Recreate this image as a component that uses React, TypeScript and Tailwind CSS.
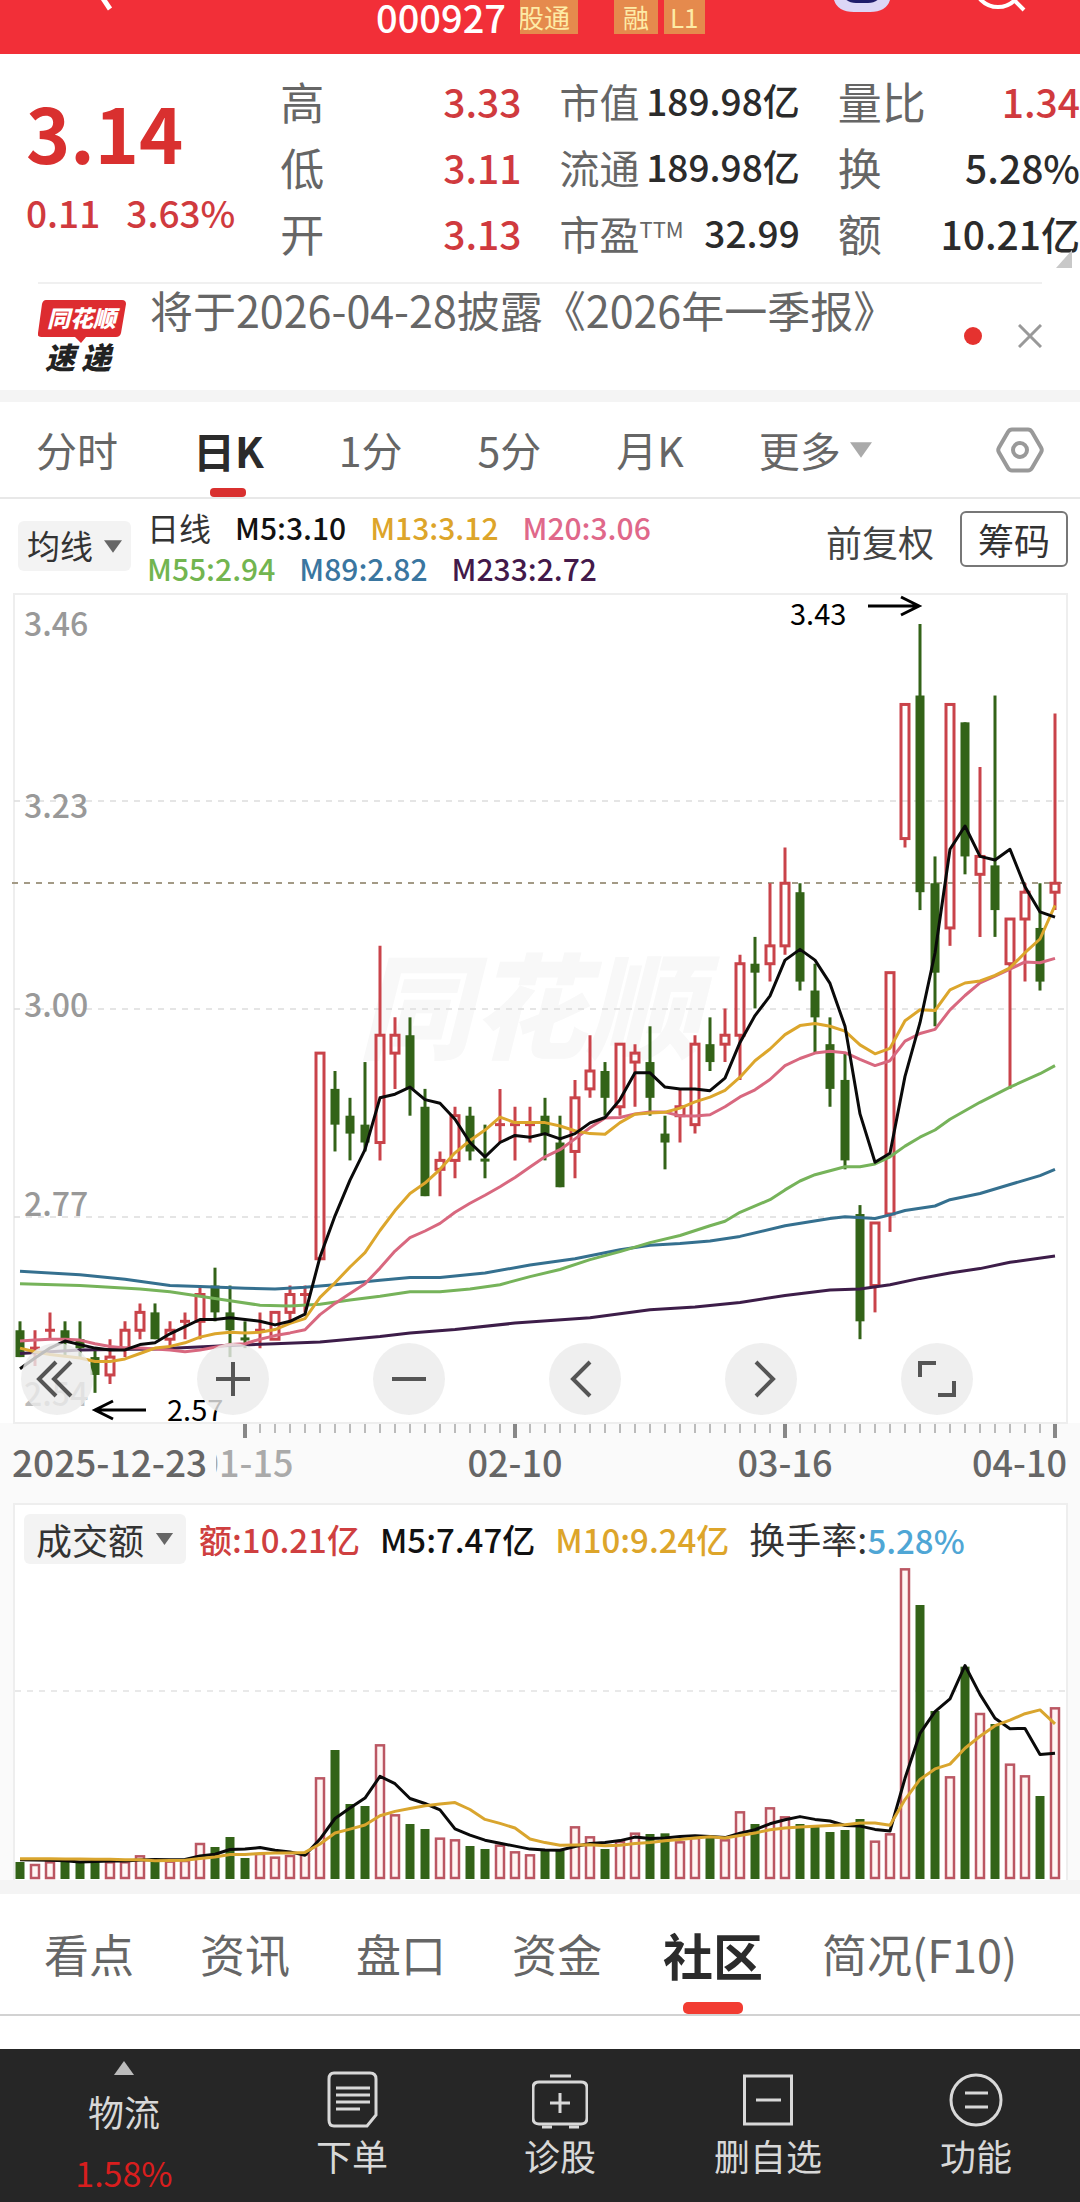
import { useState } from 'react'
import clsx from 'clsx'

type Candle = [open: number, high: number, low: number, close: number]
type Point = [index: number, value: number]

// prices are in cents
const candles: Candle[] = [
  [264, 265, 261, 261], [262, 264, 260, 262], [264, 266, 263, 264], [264, 265, 261, 263],
  [263, 265, 261, 262], [261, 262, 257, 259], [259, 263, 258, 261], [262, 265, 261, 264],
  [264, 267, 263, 266], [266, 267, 263, 263], [263, 265, 262, 264], [265, 266, 263, 265],
  [265, 269, 263, 268], [269, 271, 265, 266], [266, 269, 261, 264], [263.2, 265, 262, 263],
  [264, 266, 262, 264], [263, 266, 263, 266], [266, 269, 265, 268], [268, 269, 266, 268],
  [272, 295, 272, 295], [291, 293, 284, 287], [288, 290, 283, 286], [287, 294, 284, 285],
  [285, 307, 283, 297], [295, 299, 291, 297], [297, 299, 288, 291], [289, 291, 279, 279],
  [282, 284, 279, 283], [283, 289, 281, 288], [288, 289, 283, 284], [283.2, 287, 281, 283],
  [287, 291, 285, 287], [287, 289, 283, 287], [287, 289, 285, 287], [288, 290, 283, 286],
  [285, 288, 280, 280], [284, 292, 281, 290], [291, 297, 290, 293], [293, 294, 288, 290],
  [289, 296, 288, 296], [294, 296, 289, 295], [294, 298, 288, 290], [286, 288, 282, 285],
  [288, 291, 285, 289], [287, 297, 286, 296], [296, 299, 293, 294], [296, 300, 294, 297],
  [297, 306, 292, 305], [305, 308, 300, 304], [305, 314, 303, 307], [307, 318, 306, 314],
  [313, 314, 302, 303], [302, 305, 295, 299], [296, 299, 289, 291], [292, 295, 282, 283],
  [277, 278, 263, 265], [269, 276, 266, 276], [277, 304, 275, 304], [319, 334, 318, 334],
  [335, 343, 311, 313], [314, 317, 298, 304], [309, 334, 307, 334], [332, 332, 315, 317],
  [315, 327, 308, 317], [316, 335, 308, 311], [305, 310, 291, 310], [310, 314, 303, 313],
  [309, 314, 302, 303], [313, 333, 311, 314],
]

const turnover = [
  51, 45, 53, 56, 49, 61, 53, 53, 71, 56, 55, 57, 108, 96, 126, 63, 78, 67, 72, 77, 305, 387, 225,
  219, 404, 194, 165, 150, 124, 119, 99, 90, 103, 83, 74, 86, 86, 158, 128, 90, 114, 139, 135, 137,
  113, 126, 126, 119, 203, 165, 215, 188, 165, 161, 141, 147, 180, 115, 137, 932, 822, 504, 308,
  637, 498, 465, 346, 311, 249, 515,
]

const m55: Point[] = [
  [0, 269.2], [4, 269], [6, 268.8], [8, 268.6], [10, 268.3], [12, 267.8], [14, 267.3], [16, 266.8],
  [18, 266.7], [20, 266.9], [22, 267.4], [24, 267.8], [26, 268.3], [28, 268.3], [30, 268.6],
  [32, 269.1], [34, 270], [36, 270.8], [38, 271.9], [40, 272.8], [42, 273.8], [44, 274.6],
  [46, 275.7], [47, 276.2], [48, 277.2], [50, 278.6], [51, 279.7], [52, 280.7], [53, 281.4],
  [55, 282.3], [56, 282.3], [57, 282.6], [58, 283.4], [59, 284.6], [60, 285.6], [61, 286.4],
  [62, 287.6], [64, 289.5], [66, 291.2], [68, 292.7], [69, 293.6],
]

const m89: Point[] = [
  [0, 270.6], [4, 270.2], [7, 269.7], [10, 269], [12, 268.9], [15, 268.7], [17, 268.6], [19, 268.8],
  [21, 269.1], [24, 269.6], [26, 269.9], [28, 269.9], [31, 270.4], [34, 271.3], [37, 272],
  [40, 273], [42, 273.5], [44, 273.7], [46, 274], [48, 274.5], [51, 275.7], [54, 276.5],
  [55, 276.7], [57, 276.5], [58, 276.9], [59, 277.4], [61, 277.9], [62, 278.6], [64, 279.3],
  [66, 280.3], [68, 281.3], [69, 282],
]

const m233: Point[] = [
  [0, 261.4], [4, 261.8], [9, 261.9], [14, 262.3], [17, 262.5], [20, 262.7], [22, 263],
  [24, 263.3], [26, 263.7], [29, 264.1], [33, 264.8], [38, 265.4], [42, 266.3], [45, 266.6],
  [48, 267.1], [51, 267.9], [54, 268.5], [56, 268.6], [58, 269.1], [60, 269.8], [62, 270.4],
  [64, 270.9], [66, 271.6], [69, 272.3],
]

// seed holds the averages for the days whose window starts before the first candle
function average(values: number[], n: number, seed: number[]): Point[] {
  return values.map((_, i) => {
    if (i < n - 1) return [i, seed[i]]
    const window = values.slice(i - n + 1, i + 1)
    return [i, window.reduce((a, b) => a + b, 0) / n]
  })
}

const closes = candles.map((c) => c[3])
const m5 = average(closes, 5, [259.7, 260.9, 262, 262.8])
const m13 = average(
  closes,
  13,
  [262, 261.6, 261.3, 261.1, 260.9, 260.5, 260.5, 260.8, 261.4, 262, 262.2, 262.6],
)
const m20 = average(
  closes,
  20,
  [
    262.8, 262.9, 263, 263, 262.9, 262.5, 262.2, 262, 262, 261.9, 261.8, 261.6, 261.8, 262.1, 262.4,
    262.5, 263, 263.4, 263.7,
  ],
)
const volM5 = average(turnover, 5, [58, 57, 56, 55])
const volM10 = average(turnover, 10, [61, 61, 61, 60, 60, 59, 59, 58, 58])

const isRed = (c: Candle) => c[3] >= c[0]

const RED = '#c9434a'
const GREEN = '#336318'

const xOf = (i: number) => 20 + i * 15
const priceY = (p: number) => 31 + (343 - p) * 8.94
const volY = (v: number) => 374 - v / 3

const toPoints = (pts: Point[], y: (v: number) => number) =>
  pts.map(([i, v]) => `${xOf(i)},${y(v).toFixed(1)}`).join(' ')

function Line(p: { points: string; color: string }) {
  return (
    <polyline
      points={p.points}
      fill="none"
      stroke={p.color}
      strokeWidth="3"
      strokeLinejoin="round"
    />
  )
}

function Caret({ className }: { className?: string }) {
  return (
    <svg viewBox="0 0 20 14" className={className} fill="currentColor" aria-hidden="true">
      <path d="M0 0h20L10 14z" />
    </svg>
  )
}

function Header() {
  return (
    <header className="flex h-[54px] items-start overflow-hidden bg-[#f22f38] pl-[90px] pr-[52px]">
      <button aria-label="返回">
        <svg viewBox="0 0 24 12" className="h-3 w-6" fill="none" stroke="#fff" strokeWidth="5">
          <path d="M6-12 20 9" />
        </svg>
      </button>
      <div className="ml-[262px] flex items-center gap-[14px] text-white">
        <h1 className="text-[38px] font-medium leading-[34px]">000927</h1>
        <div className="flex gap-[6px] text-[26px] leading-[34px] text-[#fdeba6]">
          <span className="flex w-[58px] justify-end overflow-hidden bg-[#e58a4d] pr-2">
            <span className="shrink-0">股通</span>
          </span>
          <span className="ml-[30px] bg-[#e58a4d] px-[9px]">融</span>
          <span className="bg-[#e58a4d] px-[6px]">L1</span>
        </div>
      </div>
      <button aria-label="智能助手" className="ml-auto">
        <svg viewBox="0 0 60 14" className="h-[14px] w-[60px]">
          <path d="M1-6h58Q58 12 38 12H22Q2 12 1-6z" fill="#dcd6f6" />
          <path d="M10-6h40Q46 3 36 3H24Q14 3 10-6z" fill="#1f1c6b" />
        </svg>
      </button>
      <button aria-label="搜索" className="ml-[80px]">
        <svg viewBox="0 0 56 14" className="h-[14px] w-14" fill="none" stroke="#fff" strokeWidth="4">
          <circle cx="26" cy="-17" r="24" />
          <path d="m42 0 10 10" />
        </svg>
      </button>
    </header>
  )
}

const quotes = [
  [
    ['高', '3.33'],
    ['低', '3.11'],
    ['开', '3.13'],
  ],
  [
    ['市值', '189.98亿'],
    ['流通', '189.98亿'],
    ['市盈', '32.99'],
  ],
  [
    ['量比', '1.34'],
    ['换', '5.28%'],
    ['额', '10.21亿'],
  ],
]

function Quote() {
  return (
    <section className="relative grid grid-cols-[216fr_241fr_240fr_242fr] gap-x-[38px] pb-4 pl-[26px] pt-[14px]">
      <div className="text-[#d9302f]">
        <div className="pt-[9px] text-[75px] font-bold leading-[110px]">3.14</div>
        <div className="flex gap-[26px] text-[37px] font-medium leading-[50px] text-[#d03a3e]">
          <span>0.11</span>
          <span>3.63%</span>
        </div>
      </div>
      {quotes.map((col, i) => (
        <dl key={i}>
          {col.map(([label, value]) => (
            <div key={label} className="flex h-[66px] items-center justify-between">
              <dt
                className={clsx(
                  'whitespace-nowrap text-[#666]',
                  i === 1 ? 'text-[40px]' : 'text-[44px]',
                )}
              >
                {label}
                {label === '市盈' && <sup className="-top-[12px] text-[22px]">TTM</sup>}
              </dt>
              <dd
                className={clsx(
                  'whitespace-nowrap font-medium',
                  i === 1 ? 'text-[37px]' : 'text-[39px]',
                  i === 0 || value === '1.34' ? 'text-[#d03a3e]' : 'text-[#2b2b2b]',
                )}
              >
                {value}
              </dd>
            </div>
          ))}
        </dl>
      ))}
      <svg viewBox="0 0 16 18" className="absolute bottom-[14px] right-2 h-[18px] w-4" fill="#c8c8c8">
        <path d="M16 0v18H0z" />
      </svg>
    </section>
  )
}

function News() {
  return (
    <section className="mx-[38px] flex h-[108px] border-t-2 border-[#f0f0f0]">
      <svg viewBox="0 0 88 84" className="mt-4 h-[84px] w-[88px] shrink-0" aria-label="同花顺速递">
        <path d="M8 0h76q4 0 4 4l-5 29q-1 4-5 4H48l-5 6-6-6H3q-4 0-3-4L4 4q1-4 4-4z" fill="#dd2c30" />
        <text x="9" y="27" fontSize="23" fontWeight="900" fontStyle="italic" fill="#fff">
          同花顺
        </text>
        <g fontSize="30" fontWeight="900" fontStyle="italic" fill="#222">
          <text x="7" y="69">速</text>
          <text x="43" y="69">递</text>
        </g>
      </svg>
      <a href="#" className="ml-6 whitespace-nowrap text-[43px] leading-[50px] text-[#666]">
        将于2026-04-28披露《2026年一季报》
      </a>
      <div className="ml-auto mt-[43px] flex h-[18px] items-center gap-9">
        <i className="size-[18px] rounded-full bg-[#e5322f]" />
        <button aria-label="关闭">
          <svg viewBox="0 0 24 24" className="size-6" fill="none" stroke="#999" strokeWidth="3">
            <path d="m1 1 22 22M23 1 1 23" />
          </svg>
        </button>
      </div>
    </section>
  )
}

const periods = ['分时', '日K', '1分', '5分', '月K']

function Periods() {
  const [active, setActive] = useState('日K')

  return (
    <nav className="flex h-[97px] items-stretch gap-[75px] border-b-2 border-[#e8e8e8] pl-[36px] pr-[36px] text-[41px] text-[#666]">
      {periods.map((name) => (
        <button
          key={name}
          onClick={() => setActive(name)}
          className={clsx(
            'relative whitespace-nowrap',
            name === active && 'text-[42px] font-bold text-[#2b2b2b]',
          )}
        >
          {name}
          {name === active && (
            <span className="absolute bottom-0 left-1/2 h-[9px] w-9 -translate-x-1/2 rounded-[4px] bg-[#d9302f]" />
          )}
        </button>
      ))}
      <button className="flex items-center gap-[9px] whitespace-nowrap">
        更多
        <Caret className="h-[18px] w-[22px] text-[#aaa]" />
      </button>
      <button aria-label="设置" className="ml-auto">
        <svg viewBox="0 0 48 46" className="h-[46px] w-12" fill="none" stroke="#999" strokeWidth="4">
          <path d="M16 2.500h16q2.500 0 4 2.500l9 15.500q1.500 2.500 0 5L36 41q-1.500 2.500-4 2.500H16q-2.500 0-4-2.500L3 25.500q-1.500-2.500 0-5L12 5q1.500-2.500 4-2.500z" />
          <circle cx="24" cy="23" r="7" />
        </svg>
      </button>
    </nav>
  )
}

function Averages() {
  return (
    <section className="flex h-[94px] items-start justify-between pl-[18px] pr-3">
      <div className="flex gap-4">
        <button className="mt-[22px] flex h-[50px] items-center gap-[11px] rounded-[6px] bg-[#f3f3f3] px-[9px] text-[33px] text-[#333]">
          均线
          <Caret className="h-[13px] w-[18px] text-[#666]" />
        </button>
        <div className="flex flex-col pt-2 text-[30px] font-medium leading-[41px]">
          <div className="flex gap-6">
            <span className="text-[32px] font-normal text-[#333]">日线</span>
            <span className="text-[#111]">M5:3.10</span>
            <span className="text-[#dda52a]">M13:3.12</span>
            <span className="text-[#e0688a]">M20:3.06</span>
          </div>
          <div className="flex gap-6">
            <span className="text-[#72b550]">M55:2.94</span>
            <span className="text-[#3a76a0]">M89:2.82</span>
            <span className="text-[#43194a]">M233:2.72</span>
          </div>
        </div>
      </div>
      <div className="mt-[11px] flex items-center gap-[26px] text-[36px] text-[#444]">
        <button className="pt-1">前复权</button>
        <button className="h-[56px] rounded-[6px] border-2 border-[#777] px-4 leading-[50px] text-[#333]">
          筹码
        </button>
      </div>
    </section>
  )
}

const controls = [
  { label: '最早', d: 'M35 19 18 36l17 17M50 19 33 36l17 17' },
  { label: '放大', d: 'M19 36h34M36 19v34' },
  { label: '缩小', d: 'M19 36h34' },
  { label: '前移', d: 'M41 19 24 36l17 17' },
  { label: '后移', d: 'M31 19l17 17-17 17' },
  { label: '全屏', d: 'M19 34V20h16M53 38v14H37' },
]

function KLine() {
  return (
    <section className="relative bg-[#fafafa]">
      <svg viewBox="0 0 1080 910" className="block w-full" fontWeight="500">
        <path d="M0 0h1080v830H0z" fill="#fff" />
        <rect x="14" y="1" width="1053" height="829" fill="#fff" stroke="#eee" strokeWidth="2" />
        <text x="358" y="457" fontSize="114" fontWeight="900" fontStyle="italic" fill="#f8f8f8">
          同花顺
        </text>
        <path
          d="M14 208h1053M14 416h1053M14 624h1053"
          stroke="#ddd"
          strokeWidth="1.500"
          strokeDasharray="6 6"
        />
        <path d="M12 290h1055" stroke="#a39a86" strokeWidth="2" strokeDasharray="6 6" />
        <g fontSize="32" fill="#999">
          <text x="24" y="43">3.46</text>
          <text x="24" y="225">3.23</text>
          <text x="24" y="424">3.00</text>
          <text x="24" y="623">2.77</text>
          <text x="24" y="813" fill="#bbb">2.54</text>
        </g>
        {candles.map((c, i) => {
          const [open, high, low, close] = c
          const x = xOf(i)
          const top = priceY(Math.max(open, close))
          const height = Math.abs(open - close) * 8.94
          if (!isRed(c)) {
            return (
              <g key={i} fill={GREEN}>
                <rect x={x - 1.5} y={priceY(high)} width="3" height={(high - low) * 8.94} />
                <rect x={x - 4.5} y={top} width="9" height={Math.max(height, 3)} />
              </g>
            )
          }
          return (
            <g key={i} fill="none" stroke={RED} strokeWidth="3">
              <path d={`M${x} ${priceY(high)}V${top}M${x} ${top + height}V${priceY(low)}`} />
              {height ? (
                <rect x={x - 4} y={top} width="8" height={height} />
              ) : (
                <path d={`M${x - 5} ${top}h10`} />
              )}
            </g>
          )
        })}
        <Line points={toPoints(m233, priceY)} color="#3d1d49" />
        <Line points={toPoints(m89, priceY)} color="#35708f" />
        <Line points={toPoints(m55, priceY)} color="#76b35a" />
        <Line points={toPoints(m20, priceY)} color="#d8687f" />
        <Line points={toPoints(m13, priceY)} color="#dca62c" />
        <Line points={toPoints(m5, priceY)} color="#0a0a0a" />
        <g fill="none" stroke="#000" strokeWidth="3">
          <path d="M868 13h50M901 4l18 9-18 9" />
          <path d="M146 817H96M113 808l-18 9 18 9" />
        </g>
        <g fontSize="29" fontWeight="400">
          <text x="790" y="32">3.43</text>
          <text x="167" y="828">2.57</text>
        </g>
        {Array.from({ length: 55 }, (_, k) => {
          const i = k + 15
          const big = i % 18 === 15
          return (
            <path
              key={i}
              d={`M${xOf(i)} 831v${big ? 14 : 9}`}
              stroke={big ? '#888' : '#bbb'}
              strokeWidth={big ? 4 : 2}
            />
          )
        })}
        <g fontSize="36" fill="#666" textAnchor="middle">
          <text x="246" y="884" fill="#aaa">01-15</text>
          <rect x="12" y="850" width="204" height="40" fill="#fafafa" />
          <text x="12" y="884" fontSize="37" textAnchor="start">2025-12-23</text>
          <text x="515" y="884">02-10</text>
          <text x="785" y="884">03-16</text>
          <text x="1067" y="884" textAnchor="end">04-10</text>
        </g>
      </svg>
      <div className="absolute inset-x-0 bottom-[88px] flex justify-between pl-[21px] pr-[107px]">
        {controls.map((c) => (
          <button key={c.label} aria-label={c.label} className="size-[72px] rounded-full bg-[#ebebeb]/80">
            <svg viewBox="0 0 72 72" className="size-full" fill="none" stroke="#555" strokeWidth="4">
              <path d={c.d} />
            </svg>
          </button>
        ))}
      </div>
    </section>
  )
}

function Turnover() {
  return (
    <section className="bg-[#fafafa]">
      <div className="ml-[13px] mr-3 h-[377px] border-2 border-b-0 border-[#eee] bg-white">
        <div className="-mb-[58px] flex items-center gap-5 whitespace-nowrap pl-[9px] pt-2 text-[33px] font-medium leading-[50px]">
          <button className="-mr-[7px] flex items-center gap-[11px] rounded-[6px] bg-[#f3f3f3] px-3 text-[36px] font-normal text-[#333]">
            成交额
            <Caret className="h-3 w-[19px] text-[#666]" />
          </button>
          <span className="text-[#cf3f40]">额:10.21亿</span>
          <span className="text-[#111]">M5:7.47亿</span>
          <span className="text-[#dda52a]">M10:9.24亿</span>
          <span className="text-[#333]">
            <span className="text-[36px] font-normal">换手率:</span>
            <span className="text-[#4fa6d5]">5.28%</span>
          </span>
        </div>
        <svg viewBox="15 2 1051 375" className="block w-full">
          <path d="M15 186h1051" stroke="#e2e2e2" strokeWidth="1.500" strokeDasharray="6 6" />
          {turnover.map((v, i) =>
            isRed(candles[i]) ? (
              <rect
                key={i}
                x={xOf(i) - 4}
                y={volY(v) + 1}
                width="8"
                height={v / 3 - 2}
                fill="#fff5f3"
                stroke="#bb5763"
                strokeWidth="2.500"
              />
            ) : (
              <rect key={i} x={xOf(i) - 4.5} y={volY(v)} width="9" height={v / 3} fill={GREEN} />
            ),
          )}
          <Line points={toPoints(volM5, volY)} color="#0a0a0a" />
          <Line points={toPoints(volM10, volY)} color="#d9a52e" />
        </svg>
      </div>
    </section>
  )
}

const sections = ['看点', '资讯', '盘口', '资金', '社区', '简况(F10)']

function Sections() {
  const [active, setActive] = useState('社区')

  return (
    <nav className="flex h-[122px] border-b-2 border-[#d2d2d2] pl-[11px] text-[45px] text-[#666]">
      {sections.map((name) => (
        <button
          key={name}
          onClick={() => setActive(name)}
          className={clsx(
            'relative min-w-[156px] whitespace-nowrap',
            name.length > 2 && 'px-[31px]',
            name === active && 'text-[50px] font-bold text-[#2b2b2b]',
          )}
        >
          {name}
          {name === active && (
            <span className="absolute bottom-0 left-1/2 h-3 w-[60px] -translate-x-1/2 rounded-[5px] bg-[#f23c32]" />
          )}
        </button>
      ))}
    </nav>
  )
}

const actions = [
  {
    label: '下单',
    icon: (
      <>
        <path d="M10 2h36q6 0 6 6v36l-9 11H10q-5 0-5-6V8q0-6 5-6z" />
        <path d="M12 17h34M12 24h34M12 31h34M12 38h24" />
      </>
    ),
  },
  {
    label: '诊股',
    icon: (
      <>
        <path d="M7 11h42q6 0 6 6v30q0 6-6 6H7q-6 0-6-6V17q0-6 6-6z" />
        <path d="M18 5h21M10 56h10M37 56h10M28 22v20M18 32h20" />
      </>
    ),
  },
  {
    label: '删自选',
    icon: (
      <>
        <path d="M4.500 5h47v48h-47z" />
        <path d="M16 29h25" />
      </>
    ),
  },
  {
    label: '功能',
    icon: (
      <>
        <circle cx="28" cy="29" r="25" />
        <path d="M17 22h23M17 36h23" />
      </>
    ),
  },
]

function BottomBar() {
  return (
    <footer className="mt-[33px] grid h-[153px] grid-cols-[248fr_208fr_208fr_208fr_208fr] bg-[#262626] text-[36px] leading-[44px] text-[#d8d8d8]">
      <button className="flex flex-col items-center pt-3">
        <Caret className="h-[14px] w-[26px] rotate-180 text-[#bbb]" />
        <span className="mt-[14px]">物流</span>
        <span className="mt-5 text-[34px] leading-[40px] text-[#d81e1e]">1.58%</span>
      </button>
      {actions.map((a) => (
        <button key={a.label} className="flex flex-col items-center pt-[22px]">
          <svg viewBox="0 0 56 58" className="h-[58px] w-14" fill="none" stroke="#d8d8d8" strokeWidth="3">
            {a.icon}
          </svg>
          <span className="mt-1">{a.label}</span>
        </button>
      ))}
    </footer>
  )
}

export default function App() {
  return (
    <div
      lang="zh-CN"
      className="min-h-screen overflow-x-hidden bg-white font-['Noto_Sans_CJK_SC',sans-serif]"
    >
      <Header />
      <Quote />
      <News />
      <div className="h-3 bg-[#f4f4f4]" />
      <Periods />
      <Averages />
      <KLine />
      <Turnover />
      <div className="h-[14px] bg-[#f4f4f4]" />
      <Sections />
      <BottomBar />
    </div>
  )
}
